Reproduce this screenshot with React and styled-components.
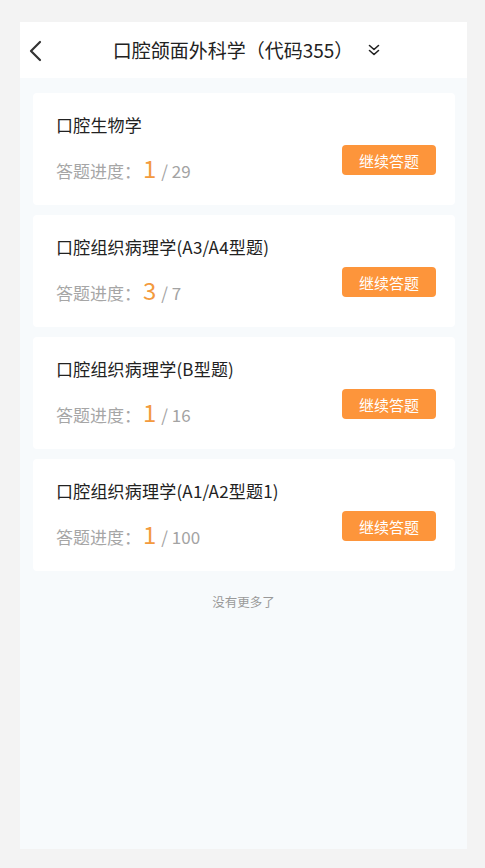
import React from 'react';
import styled, { createGlobalStyle } from 'styled-components';

const GlobalStyle = createGlobalStyle`
  html, body {
    margin: 0;
    padding: 0;
    background: #f3f3f3;
    font-family: "Noto Sans CJK SC", "Noto Sans", sans-serif;
  }
`;

const Panel = styled.div`
  margin: 22px 0 0 20px;
  width: 447px;
  height: 827px;
  background: #f7fafc;
  display: flex;
  flex-direction: column;
`;

const Header = styled.div`
  height: 56px;
  background: #ffffff;
  display: grid;
  grid-template-columns: 1fr auto 1fr;
  align-items: center;
  padding: 0 8px;
`;

const BackButton = styled.div`
  justify-self: start;
  display: flex;
  align-items: center;
  height: 22px;
  padding-top: 2px;
`;

const TitleGroup = styled.div`
  display: flex;
  align-items: center;
  gap: 15px;
  padding-left: 6px;
`;

const Title = styled.div`
  font-size: 19px;
  color: #222;
  line-height: 24px;
  white-space: nowrap;
`;

const List = styled.div`
  display: flex;
  flex-direction: column;
  gap: 10px;
  padding: 15px 12px 0 13px;
`;

const Card = styled.div`
  height: 112px;
  box-sizing: border-box;
  background: #ffffff;
  border-radius: 4px;
  display: flex;
  align-items: flex-start;
  padding: 0 19px 0 23px;
`;

const Info = styled.div`
  display: flex;
  flex-direction: column;
  padding-top: 20px;
`;

const CardTitle = styled.div`
  font-size: 17px;
  line-height: 24px;
  letter-spacing: 0.2px;
  color: #222;
`;

const Progress = styled.div`
  margin-top: 16px;
  display: flex;
  align-items: baseline;
  line-height: 30px;
  color: #a3a3a3;
  font-size: 17px;
`;

const Label = styled.span`
  font-size: 17px;
  color: #a6a6a6;
`;

const Current = styled.span`
  font-size: 24px;
  color: #f39a3e;
  margin: 0 5px 0 2px;
`;

const ContinueButton = styled.button`
  margin: 52px 0 0 auto;
  width: 94px;
  height: 30px;
  border: none;
  border-radius: 4px;
  background: #fd953b;
  color: #ffffff;
  font-family: inherit;
  font-size: 15px;
  padding: 0;
  cursor: pointer;
`;

const NoMore = styled.div`
  margin-top: 22px;
  text-align: center;
  font-size: 12.5px;
  line-height: 17px;
  color: #999;
`;

const items = [
  { name: '口腔生物学', done: 1, total: 29 },
  { name: '口腔组织病理学(A3/A4型题)', done: 3, total: 7 },
  { name: '口腔组织病理学(B型题)', done: 1, total: 16 },
  { name: '口腔组织病理学(A1/A2型题1)', done: 1, total: 100 },
];

export default function App() {
  return (
    <>
      <GlobalStyle />
      <Panel>
        <Header>
          <BackButton>
            <svg width="14" height="22" viewBox="0 0 14 22">
              <polyline points="12,2 3,11 12,20" fill="none" stroke="#333" strokeWidth="2.2" strokeLinecap="round" strokeLinejoin="round" />
            </svg>
          </BackButton>
          <TitleGroup>
            <Title>口腔颌面外科学（代码355）</Title>
            <svg width="12" height="12" viewBox="0 0 12 12">
              <polyline points="1.5,1.5 6,5.5 10.5,1.5" fill="none" stroke="#222" strokeWidth="1.6" strokeLinecap="round" strokeLinejoin="round" />
              <polyline points="1.5,6.5 6,10.5 10.5,6.5" fill="none" stroke="#222" strokeWidth="1.6" strokeLinecap="round" strokeLinejoin="round" />
            </svg>
          </TitleGroup>
          <div />
        </Header>
        <List>
          {items.map((it) => (
            <Card key={it.name}>
              <Info>
                <CardTitle>{it.name}</CardTitle>
                <Progress>
                  <Label>答题进度：</Label>
                  <Current>{it.done}</Current>
                  <span>/ {it.total}</span>
                </Progress>
              </Info>
              <ContinueButton>继续答题</ContinueButton>
            </Card>
          ))}
        </List>
        <NoMore>没有更多了</NoMore>
      </Panel>
    </>
  );
}
